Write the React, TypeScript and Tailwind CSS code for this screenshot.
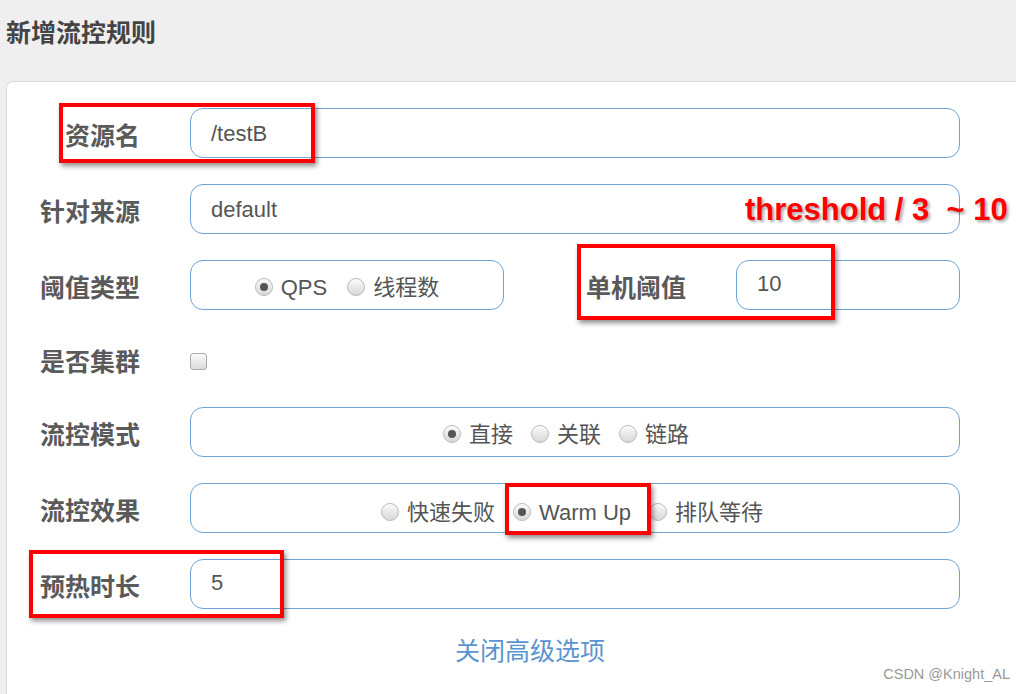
import React from "react";

const cjk = { fontFamily: '"Liberation Sans", "Noto Sans CJK SC", sans-serif' };

function Radio({ label, checked }: { label: string; checked?: boolean }) {
  return (
    <span className="inline-flex items-center">
      <span className="flex h-[18px] w-[18px] items-center justify-center rounded-full border border-[#b9b9b9] bg-gradient-to-b from-[#fafafa] to-[#d8d8d8] shadow-[inset_0_1px_1px_rgba(255,255,255,0.8)]">
        {checked && <span className="h-[8px] w-[8px] rounded-full bg-[#555]" />}
      </span>
      <span className="ml-[8px] text-[22px] text-[#555]">{label}</span>
    </span>
  );
}

function Label({ text, width = "w-[133px]" }: { text: string; width?: string }) {
  return (
    <div className={`${width} shrink-0 pt-[8px] text-right text-[25px] font-bold text-[#5a5a5a]`}>{text}</div>
  );
}

const box = "h-[50px] rounded-[13px] border border-[#6fa3d6] bg-white";

export default function App() {
  return (
    <div className="relative h-[694px] w-[1016px] overflow-hidden bg-[#efefef]" style={cjk}>
      {/* header */}
      <div className="flex h-[81px] items-start pl-[6px] pt-[16px]">
        <h1 className="text-[25px] font-bold leading-[34px] text-[#444]">新增流控规则</h1>
      </div>

      {/* panel */}
      <div className="ml-[6px] h-[613px] rounded-tl-[7px] border-l border-t border-[#dcdcdc] bg-white pt-[26px]">
        <div className="flex items-center">
          <Label text="资源名" />
          <div className={`${box} ml-[50px] flex w-[770px] items-center px-[20px] text-[22px] text-[#555]`}>/testB</div>
        </div>

        <div className="mt-[26px] flex items-center">
          <Label text="针对来源" />
          <div className={`${box} ml-[50px] flex w-[770px] items-center px-[20px] text-[22px] text-[#555]`}>default</div>
        </div>

        <div className="mt-[26px] flex items-center">
          <Label text="阈值类型" />
          <div className={`${box} ml-[50px] flex w-[314px] items-center justify-center gap-[20px] pt-[4px]`}>
            <Radio label="QPS" checked />
            <Radio label="线程数" />
          </div>
          <Label text="单机阈值" width="w-[182px]" />
          <div className={`${box} ml-[50px] flex w-[224px] items-center px-[20px] pb-[4px] text-[22px] text-[#555]`}>10</div>
        </div>

        <div className="mt-[26px] flex h-[45px] items-center">
          <Label text="是否集群" />
          <div className="ml-[50px] mt-[6px] h-[17px] w-[17px] rounded-[3px] border border-[#aaa] bg-gradient-to-b from-[#fbfbfb] to-[#dcdcdc]" />
        </div>

        <div className="mt-[26px] flex items-center">
          <Label text="流控模式" />
          <div className={`${box} ml-[50px] flex w-[770px] items-center justify-center gap-[18px] pt-[4px] pr-[18px]`}>
            <Radio label="直接" checked />
            <Radio label="关联" />
            <Radio label="链路" />
          </div>
        </div>

        <div className="mt-[26px] flex items-center">
          <Label text="流控效果" />
          <div className={`${box} ml-[50px] flex w-[770px] items-center justify-center gap-[18px] pt-[8px] pr-[6px]`}>
            <Radio label="快速失败" />
            <Radio label="Warm Up" checked />
            <Radio label="排队等待" />
          </div>
        </div>

        <div className="mt-[26px] flex items-center">
          <Label text="预热时长" />
          <div className={`${box} ml-[50px] flex w-[770px] items-center px-[20px] pb-[4px] text-[22px] text-[#555]`}>5</div>
        </div>

        <div className="mt-[24px] flex w-[1046px] justify-center">
          <span className="text-[25px] text-[#5b95d0]">关闭高级选项</span>
        </div>
      </div>

      {/* annotations */}
      <div className="absolute left-[59px] top-[103px] h-[60px] w-[256px] border-[4px] border-[#f00] shadow-[2px_3px_5px_rgba(0,0,0,0.45)]" />
      <div className="absolute left-[577px] top-[244px] h-[76px] w-[258px] border-[4px] border-[#f00] shadow-[2px_3px_5px_rgba(0,0,0,0.45)]" />
      <div className="absolute left-[505px] top-[483px] h-[52px] w-[146px] border-[4px] border-[#f00] shadow-[2px_3px_5px_rgba(0,0,0,0.45)]" />
      <div className="absolute left-[29px] top-[550px] h-[68px] w-[255px] border-[4px] border-[#f00] shadow-[2px_3px_5px_rgba(0,0,0,0.45)]" />
      <div className="absolute left-[745px] top-[192px] whitespace-pre text-[31px] font-bold leading-[36px] text-[#f00] [text-shadow:2px_2px_3px_rgba(0,0,0,0.35)]">
        {"threshold / 3  ~ 10"}
      </div>

      <div className="absolute bottom-[8px] right-[6px] text-[14.5px] text-[#999]">CSDN @Knight_AL</div>
    </div>
  );
}
